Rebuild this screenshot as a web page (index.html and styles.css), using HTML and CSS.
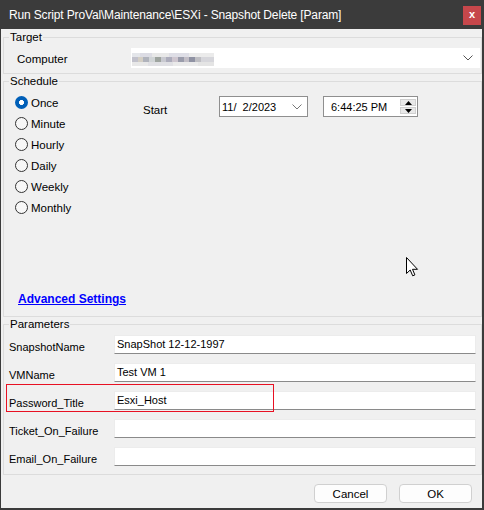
FILE: index.html
```html
<!DOCTYPE html>
<html>
<head>
<meta charset="utf-8">
<link rel="stylesheet" href="styles.css">
</head>
<body>
<div class="window">
  <div class="titlebar">
    <span class="title">Run Script ProVal\Maintenance\ESXi - Snapshot Delete [Param]</span>
    <span class="close">x</span>
  </div>
  <div class="client">
    <fieldset class="group target">
      <legend>Target</legend>
      <div class="target-body">
        <span class="computer-label">Computer</span>
        <div class="combo">
          <div class="blur">
            <div class="blur-row r1"></div>
            <div class="blur-row r2"></div>
            <div class="blur-row r3"></div>
          </div>
          <svg class="chev" width="10" height="6" viewBox="0 0 10 6"><path d="M0.5 0.5 L5 5 L9.5 0.5" fill="none" stroke="#555" stroke-width="1"/></svg>
        </div>
      </div>
    </fieldset>

    <fieldset class="group schedule">
      <legend>Schedule</legend>
      <div class="schedule-body">
        <div class="sched-top">
          <div class="radios">
            <div class="radio-row"><span class="radio checked"></span><span>Once</span></div>
            <div class="radio-row"><span class="radio"></span><span>Minute</span></div>
            <div class="radio-row"><span class="radio"></span><span>Hourly</span></div>
            <div class="radio-row"><span class="radio"></span><span>Daily</span></div>
            <div class="radio-row"><span class="radio"></span><span>Weekly</span></div>
            <div class="radio-row"><span class="radio"></span><span>Monthly</span></div>
          </div>
          <span class="start-label">Start</span>
          <div class="datebox">
            <span class="date-text">11/&nbsp;&nbsp;2/2023</span>
            <svg class="date-chev" width="10" height="6" viewBox="0 0 10 6"><path d="M0.5 0.5 L5 5 L9.5 0.5" fill="none" stroke="#777" stroke-width="1"/></svg>
          </div>
          <div class="timebox">
            <span class="time-text">6:44:25 PM</span>
            <div class="spinner">
              <span class="spin up"><svg width="7" height="4" viewBox="0 0 7 4"><path d="M3.5 0 L7 4 L0 4 Z" fill="#000"/></svg></span>
              <span class="spin down"><svg width="7" height="4" viewBox="0 0 7 4"><path d="M0 0 L7 0 L3.5 4 Z" fill="#000"/></svg></span>
            </div>
          </div>
        </div>
        <a class="adv-link">Advanced Settings</a>
      </div>
    </fieldset>

    <fieldset class="group params">
      <legend>Parameters</legend>
      <div class="params-body">
        <div class="param-row"><span class="param-label">SnapshotName</span><div class="textbox">SnapShot 12-12-1997</div></div>
        <div class="param-row"><span class="param-label">VMName</span><div class="textbox">Test VM 1</div></div>
        <div class="param-row highlight"><span class="param-label">Password_Title</span><div class="textbox">Esxi_Host</div><span class="red-box"></span></div>
        <div class="param-row"><span class="param-label">Ticket_On_Failure</span><div class="textbox"></div></div>
        <div class="param-row"><span class="param-label">Email_On_Failure</span><div class="textbox"></div></div>
      </div>
    </fieldset>

    <div class="buttons">
      <span class="btn">Cancel</span>
      <span class="btn">OK</span>
    </div>
  </div>
  <svg class="cursor" width="13" height="20" viewBox="0 0 13 20"><path d="M0.5 0.5 L0.5 16.5 L4.2 13 L6.7 18.8 L8.9 17.9 L6.5 12.3 L11.5 12.3 Z" fill="#fff" stroke="#000" stroke-width="1" stroke-linejoin="miter"/></svg>
</div>
</body>
</html>
```
FILE: styles.css
```css
* { box-sizing: border-box; }
html, body { margin: 0; padding: 0; }
body {
  width: 484px;
  height: 510px;
  overflow: hidden;
  background: #f0f0f0;
  font-family: "Liberation Sans", Arial, sans-serif;
  font-size: 11px;
  color: #000;
}
.window {
  position: relative;
  width: 484px;
  height: 510px;
  display: flex;
  flex-direction: column;
}
.titlebar {
  height: 29px;
  flex: none;
  background: #3b3b3b;
  color: #fff;
  display: flex;
  align-items: center;
  padding: 1px 3px 0 9px;
}
.title {
  flex: 1;
  white-space: nowrap;
  font-size: 12px;
  letter-spacing: -0.15px;
}
.close {
  width: 18px;
  height: 19px;
  background: #c6474b;
  color: #fff;
  font-weight: bold;
  font-size: 11px;
  display: flex;
  align-items: center;
  justify-content: center;
  line-height: 1;
  padding-bottom: 2px;
}
.client {
  flex: 1;
  background: #f0f0f0;
  border-left: 1px solid #3b3b3b;
  border-right: 2px solid #3b3b3b;
  border-bottom: 2px solid #3b3b3b;
  padding: 0 0 0 2px;
  display: flex;
  flex-direction: column;
}
.group {
  margin: 0;
  padding: 0;
  border: 1px solid #dcdcdc;
  min-width: 0;
}
.group legend {
  padding: 0 1px;
  margin-left: 5px;
  line-height: 14px;
  font-size: 11.5px;
}
.target { margin-top: 1px; }
.target-body {
  display: flex;
  align-items: center;
  padding: 4px 1px 5px 13px;
}
.computer-label { width: 114px; font-size: 11.5px; padding-top: 1px; }
.combo {
  flex: 1;
  height: 20px;
  background: #fff;
  display: flex;
  align-items: center;
  justify-content: space-between;
  padding: 0 7px 0 1px;
}
.blur { width: 82px; display: flex; flex-direction: column; margin-top: 2px; }
.blur-row { height: 4px; }
.blur-row.r1 {
  background: linear-gradient(90deg, #e4e6ea 0 10%, #dcdce4 10% 25%, #e8e8e8 25% 45%, #dedee6 45% 70%, #ebebeb 70% 100%);
}
.blur-row.r2 {
  height: 5px;
  background: linear-gradient(90deg, #c2c2cc 0 7%, #d4cfc5 7% 14%, #b0b3bc 14% 21%, #d0d4d6 21% 28%, #9ea49f 28% 35%, #c8c9d0 35% 42%, #acacbb 42% 49%, #cec6cf 49% 56%, #9a9cab 56% 63%, #c2bec6 63% 70%, #8f92a3 70% 77%, #bebec3 77% 84%, #d6d6db 84% 100%);
}
.blur-row.r3 {
  background: linear-gradient(90deg, #e8e8e8 0 20%, #e0e0e4 20% 50%, #eaeaea 50% 80%, #e4e4e4 80% 100%);
}
.schedule { margin-top: 0; height: 243px; }
.schedule legend { margin-top: 1px; }
.schedule-body {
  display: flex;
  flex-direction: column;
  padding: 4px 0 0 11px;
}
.sched-top { display: flex; align-items: flex-start; }
.radios { width: 128px; display: flex; flex-direction: column; }
.radio-row {
  height: 21px;
  display: flex;
  align-items: center;
  gap: 3px;
  font-size: 11.5px;
}
.radio {
  width: 13px;
  height: 13px;
  border-radius: 50%;
  border: 1px solid #333;
  background: #f7f7f7;
  flex: none;
}
.radio.checked {
  border: none;
  background: radial-gradient(circle, #fff 0 2.2px, #005fb8 2.8px);
}
.start-label { width: 76px; margin-top: 11px; line-height: 14px; font-size: 11.5px; }
.datebox {
  margin-top: 4px;
  width: 89px;
  height: 21px;
  background: #fff;
  border: 1px solid #8f8f8f;
  display: flex;
  align-items: center;
  justify-content: space-between;
  padding: 0 5px 0 2px;
}
.date-chev { margin-top: 1px; }
.timebox {
  margin-top: 4px;
  margin-left: 15px;
  width: 95px;
  height: 21px;
  background: #fff;
  border: 1px solid #8f8f8f;
  display: flex;
  align-items: center;
  justify-content: space-between;
  padding: 0 1px 0 7px;
}
.spinner {
  width: 16px;
  height: 15px;
  display: flex;
  flex-direction: column;
  gap: 1px;
}
.spin {
  flex: 1;
  background: #e8e8e8;
  border: 1px solid #d0d0d0;
  display: flex;
  align-items: center;
  justify-content: center;
}
.adv-link {
  margin-top: 74px;
  margin-left: 3px;
  align-self: flex-start;
  color: #0000ff;
  font-weight: bold;
  font-size: 12px;
  text-decoration: underline;
  line-height: 14px;
}
.params { margin-top: 0; }
.params-body {
  display: flex;
  flex-direction: column;
  gap: 9px;
  padding: 4px 5px 8px 5px;
}
.param-row {
  position: relative;
  display: flex;
  align-items: center;
  height: 19px;
}
.param-label { width: 105px; padding-top: 4px; }
.textbox {
  flex: 1;
  height: 19px;
  background: #fff;
  border: 1px solid #ececec;
  border-bottom-color: #8a8a8a;
  padding: 0 2px;
  line-height: 16px;
  white-space: nowrap;
}
.red-box {
  position: absolute;
  left: -3px;
  top: -7px;
  width: 268px;
  height: 28px;
  border: 1px solid #e81123;
}
.buttons {
  display: flex;
  justify-content: flex-end;
  gap: 12px;
  padding: 9px 10px 0 0;
}
.btn {
  width: 73px;
  height: 19px;
  background: #fdfdfd;
  border: 1px solid #d0d0d0;
  border-radius: 4px;
  display: flex;
  align-items: center;
  justify-content: center;
  font-size: 11.5px;
}
.cursor {
  position: absolute;
  left: 406px;
  top: 257px;
}
```
